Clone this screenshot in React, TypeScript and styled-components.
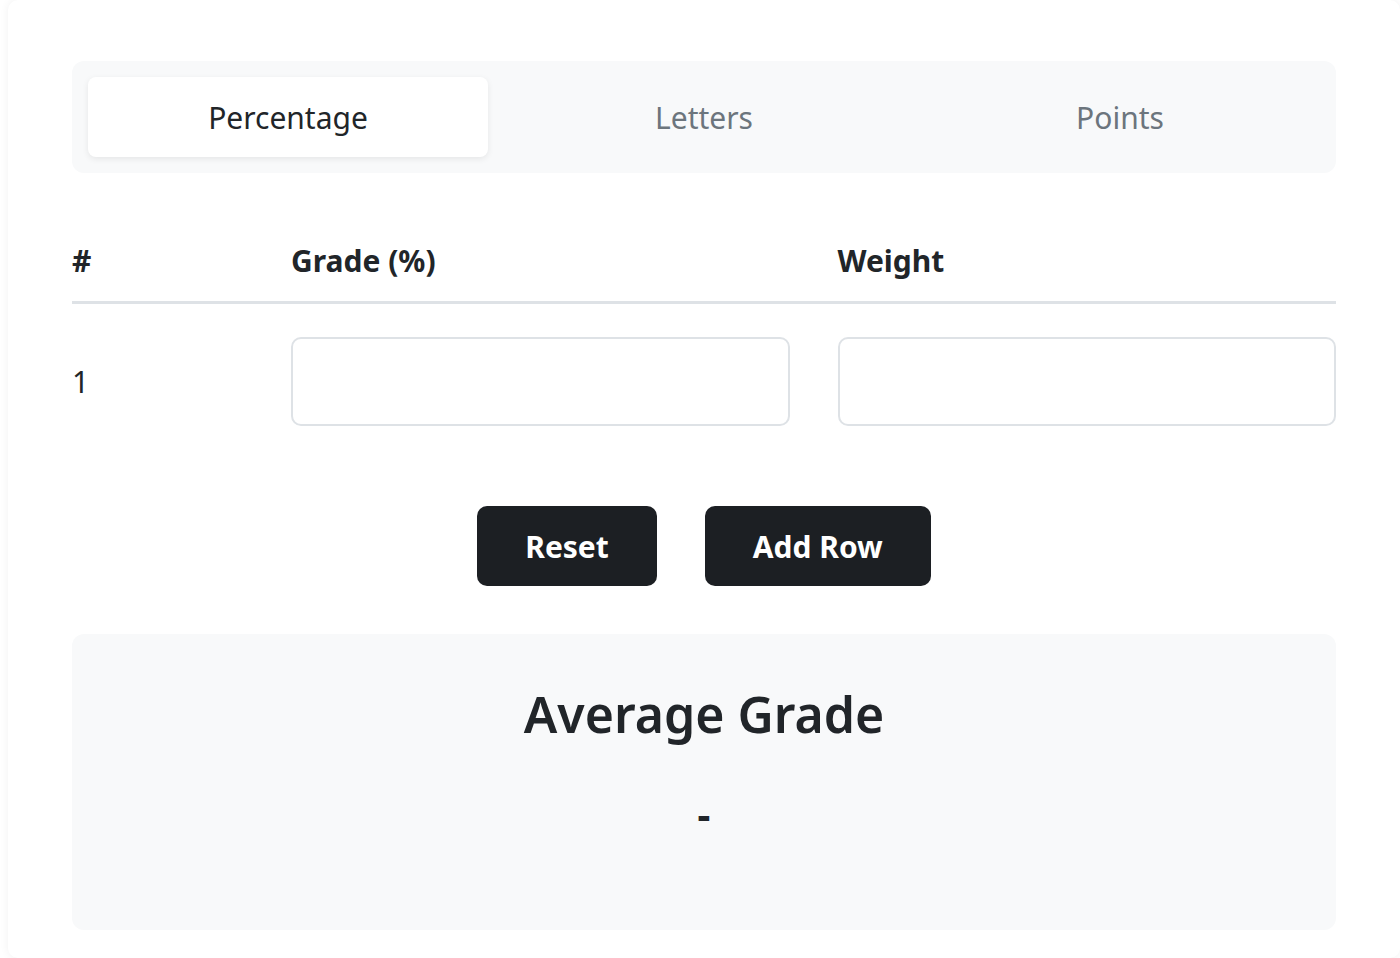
import React, { useState } from 'react'
import styled, { createGlobalStyle } from 'styled-components'

const GlobalStyle = createGlobalStyle`
  html, body {
    margin: 0;
    padding: 0;
    background: #ffffff;
  }
  body {
    font-family: 'Noto Sans', 'Open Sans', sans-serif;
    color: #212529;
  }
`

const Page = styled.div`
  padding: 0 0 0 8px;
`

const Card = styled.div`
  background: #ffffff;
  border-radius: 10px;
  box-shadow: 0 0 10px rgba(0, 0, 0, 0.06);
  padding: 61px 64px 28px;
`

const Tabs = styled.div`
  display: grid;
  grid-template-columns: repeat(3, 1fr);
  gap: 16px;
  padding: 16px;
  background: #f8f9fa;
  border-radius: 12px;
`

const Tab = styled.button<{ $active?: boolean }>`
  height: 80px;
  border: 0;
  border-radius: 8px;
  font-family: inherit;
  font-size: 30px;
  cursor: pointer;
  color: ${({ $active }) => ($active ? '#212529' : '#6c757d')};
  background: ${({ $active }) => ($active ? '#ffffff' : 'transparent')};
  box-shadow: ${({ $active }) =>
    $active ? '0 2px 6px rgba(0, 0, 0, 0.08)' : 'none'};
`

const Table = styled.div`
  margin-top: 48px;
`

const Row = styled.div<{ $head?: boolean }>`
  display: grid;
  grid-template-columns: 171px 1fr 1fr;
  column-gap: 48px;
  align-items: center;
  padding: ${({ $head }) => ($head ? '18px 0 18px' : '33px 0 0')};
  border-bottom: ${({ $head }) => ($head ? '3px solid #dee2e6' : 'none')};
`

const HeadCell = styled.div`
  font-size: 30px;
  font-weight: 700;
  line-height: 44px;
`

const Num = styled.div`
  font-size: 30px;
  line-height: 44px;
`

const Input = styled.input`
  box-sizing: border-box;
  width: 100%;
  height: 89px;
  border: 2px solid #dee2e6;
  border-radius: 10px;
  background: #ffffff;
  font-family: inherit;
  font-size: 30px;
  padding: 0 20px;
  outline: none;
`

const Actions = styled.div`
  display: flex;
  justify-content: center;
  gap: 48px;
  margin-top: 80px;
`

const Button = styled.button`
  height: 80px;
  padding: 0 48px;
  border: 0;
  border-radius: 10px;
  background: #1c1f23;
  color: #ffffff;
  font-family: inherit;
  font-size: 30px;
  font-weight: 700;
  cursor: pointer;
`

const Result = styled.div`
  margin-top: 48px;
  background: #f8f9fa;
  border-radius: 12px;
  height: 296px;
  display: flex;
  flex-direction: column;
  align-items: center;
  padding-top: 48px;
  box-sizing: border-box;
`

const ResultTitle = styled.h2`
  margin: 0;
  font-size: 50px;
  font-weight: 600;
  line-height: 64px;
`

const ResultValue = styled.div`
  margin-top: 40px;
  font-size: 40px;
  font-weight: 700;
  line-height: 56px;
`

const tabs = ['Percentage', 'Letters', 'Points']

export default function App() {
  const [active, setActive] = useState(0)
  return (
    <Page>
      <GlobalStyle />
      <Card>
        <Tabs>
          {tabs.map((t, i) => (
            <Tab key={t} $active={i === active} onClick={() => setActive(i)}>
              {t}
            </Tab>
          ))}
        </Tabs>
        <Table>
          <Row $head>
            <HeadCell>#</HeadCell>
            <HeadCell>Grade (%)</HeadCell>
            <HeadCell>Weight</HeadCell>
          </Row>
          <Row>
            <Num>1</Num>
            <Input />
            <Input />
          </Row>
        </Table>
        <Actions>
          <Button>Reset</Button>
          <Button>Add Row</Button>
        </Actions>
        <Result>
          <ResultTitle>Average Grade</ResultTitle>
          <ResultValue>-</ResultValue>
        </Result>
      </Card>
    </Page>
  )
}
